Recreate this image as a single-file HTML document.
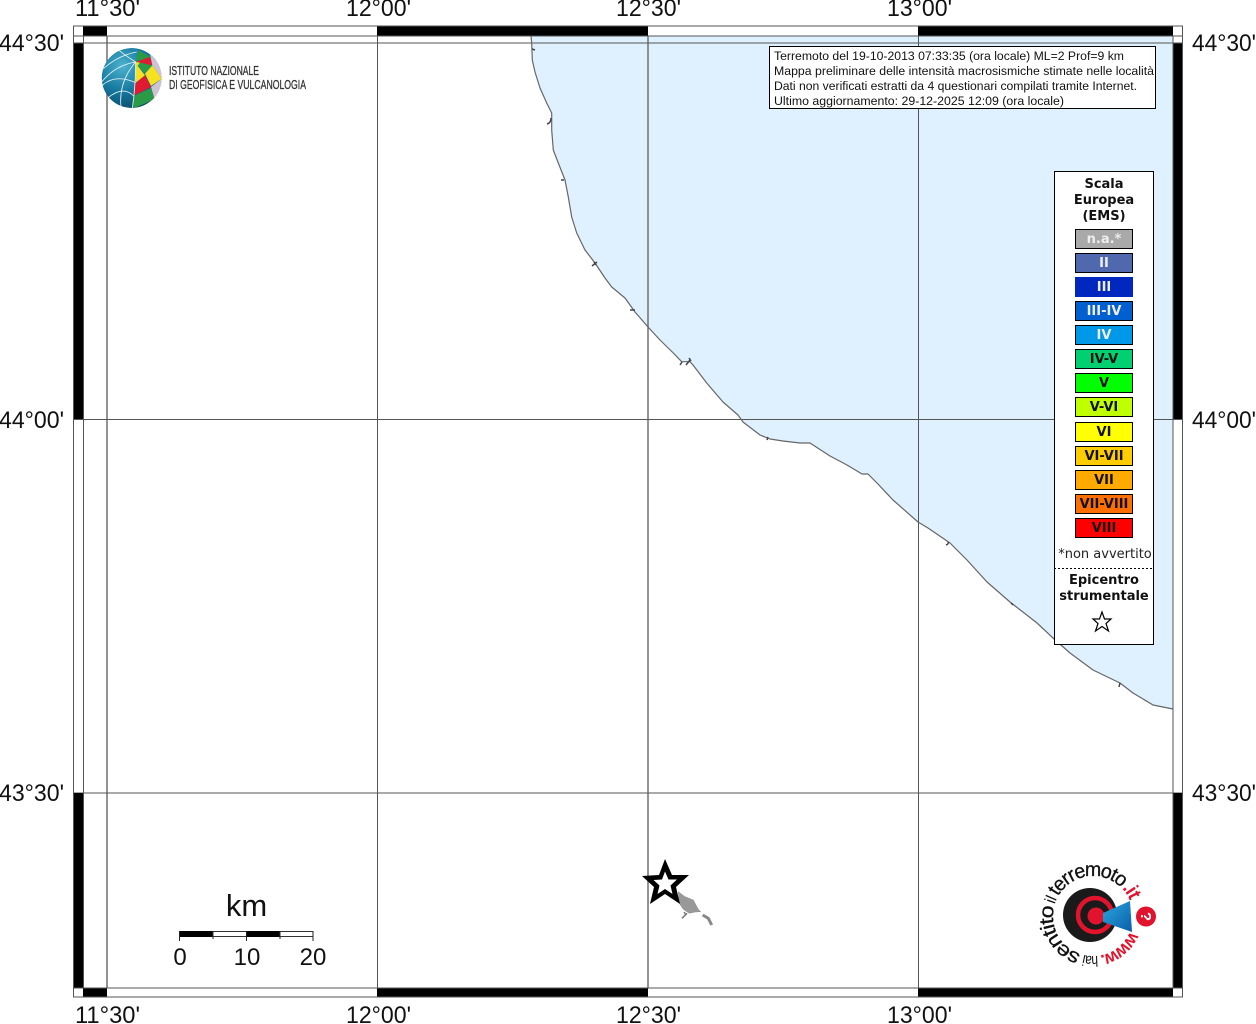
<!DOCTYPE html>
<html>
<head>
<meta charset="utf-8">
<title>Mappa intensità macrosismiche</title>
<style>
html,body{margin:0;padding:0;background:#fff;width:1256px;height:1024px;overflow:hidden}
svg{display:block;position:absolute;left:0;top:0}
.t{font-family:"Liberation Sans",sans-serif;font-size:24px;fill:#111}
.i{font-family:"Liberation Sans",sans-serif;font-size:12.3px;fill:#111}
.d{font-family:"DejaVu Sans",sans-serif;font-weight:bold;font-size:13px;text-anchor:middle;fill:#111}
.s{font-family:"DejaVu Sans",sans-serif;font-weight:bold;font-size:13px;text-anchor:middle;fill:#111}
.w{fill:#eee}
</style>
</head>
<body>
<svg width="1256" height="1024" viewBox="0 0 1256 1024" xmlns="http://www.w3.org/2000/svg">
<rect width="1256" height="1024" fill="#fff"/>

<!-- sea -->
<polygon fill="#dff1ff" points="531,36 1173,36 1173,709 1153,705 1133,693 1120,683 1093,670 1070,653 1053,638 1037,623 1010,602 987,582 967,560 950,543 928,528 918,522 893,500 877,483 868,474 862,474 847,465 830,456 810,443 800,443 783,441 770,439 760,435 743,422 738,415 723,402 706.7,383 693,365 690,361.7 681.7,361.7 673.3,353 660,340 648,327 635,312 625,298 611.7,287 605,278 595,263 585,250 576.7,233 571.7,217 568.3,197 565,180 558.3,163 553.3,150 551.7,130 551.7,113 546.7,103 540,88 535,72 532.3,60"/>

<!-- graticule -->
<g stroke="#555" stroke-width="1" fill="none">
<path d="M107 36V988M648 36V988" stroke-width="1.4" stroke="#666"/>
<path d="M377.500 36V988M918.500 36V988"/>
<path d="M74 419.500H1182M74 793H1182"/>
<path d="M74 43H1182M74 36H1182"/>
</g>

<!-- coast -->
<polyline fill="none" stroke="#666" stroke-width="1.2" stroke-linejoin="round" points="531,36 531.7,43 532.3,60 535,72 540,88 546.7,103 551.7,113 551.7,130 553.3,150 558.3,163 565,180 568.3,197 571.7,217 576.7,233 585,250 595,263 605,278 611.7,287 625,298 635,312 648,327 660,340 673.3,353 681.7,361.7 690,361.7 693,365 706.7,383 723,402 738,415 743,422 760,435 770,439 783,441 800,443 810,443 830,456 847,465 862,474 868,474 877,483 893,500 918,522 928,528 950,543 967,560 987,582 1010,602 1037,623 1053,638 1070,653 1093,670 1120,683 1133,693 1153,705 1173,709"/>
<g fill="none" stroke="#444" stroke-width="1.5">
<path d="M532 49l3 1"/>
<path d="M551 118q0 5-4 6"/>
<path d="M564 180h-3"/>
<path d="M597 262l-5 4M594 262l2 3"/>
<path d="M635 310l-5-0"/>
<path d="M682 362l-2 3M690 360l-4 5M689 358l2 3"/>
<path d="M768 437l-1 3"/>
<path d="M948 542q1 2-2 3"/>
<path d="M1011 603l2 2"/>
<path d="M1120 683l-1 4"/>
</g>

<!-- frame bands -->
<g fill="#000">
<rect x="83" y="26" width="24" height="10"/>
<rect x="377" y="26" width="271" height="10"/>
<rect x="918" y="26" width="255" height="10"/>
<rect x="83" y="988" width="24" height="9"/>
<rect x="377" y="988" width="271" height="9"/>
<rect x="918" y="988" width="255" height="9"/>
<rect x="74" y="43" width="10" height="376"/>
<rect x="74" y="793" width="10" height="195"/>
<rect x="1173" y="43" width="10" height="376"/>
<rect x="1173" y="793" width="10" height="195"/>
</g>
<g stroke="#555" stroke-width="1" fill="none">
<rect x="73.500" y="26" width="1109" height="971"/>
<rect x="83.500" y="36" width="1089.500" height="952"/>
<path d="M74 43H84M1173 43H1183M73.500 988H84M1173 988H1183"/>
</g>

<!-- tick labels -->
<g class="t">
<text x="75" y="16" textLength="65" lengthAdjust="spacingAndGlyphs">11°30'</text><text x="346" y="16" textLength="65" lengthAdjust="spacingAndGlyphs">12°00'</text><text x="616" y="16" textLength="65" lengthAdjust="spacingAndGlyphs">12°30'</text><text x="887" y="16" textLength="65" lengthAdjust="spacingAndGlyphs">13°00'</text>
<text x="75" y="1023" textLength="65" lengthAdjust="spacingAndGlyphs">11°30'</text><text x="346" y="1023" textLength="65" lengthAdjust="spacingAndGlyphs">12°00'</text><text x="616" y="1023" textLength="65" lengthAdjust="spacingAndGlyphs">12°30'</text><text x="887" y="1023" textLength="65" lengthAdjust="spacingAndGlyphs">13°00'</text>
<text x="-1" y="51" textLength="65" lengthAdjust="spacingAndGlyphs">44°30'</text><text x="-1" y="428" textLength="65" lengthAdjust="spacingAndGlyphs">44°00'</text><text x="-1" y="801" textLength="65" lengthAdjust="spacingAndGlyphs">43°30'</text>
<text x="1192" y="51" textLength="64" lengthAdjust="spacingAndGlyphs">44°30'</text><text x="1192" y="428" textLength="64" lengthAdjust="spacingAndGlyphs">44°00'</text><text x="1192" y="801" textLength="64" lengthAdjust="spacingAndGlyphs">43°30'</text>
</g>

<!-- INGV logo -->
<defs>
<radialGradient id="g" cx="35%" cy="30%" r="75%">
<stop offset="0" stop-color="#4db3cf"/><stop offset=".55" stop-color="#16799f"/><stop offset="1" stop-color="#0b4c6c"/>
</radialGradient>
<clipPath id="c"><circle cx="110" cy="108" r="90"/></clipPath>
<path id="ring" d="M1139 916A46 46 0 1 1 1047 916A46 46 0 1 1 1139 916" fill="none"/>
<linearGradient id="b" x1="0" y1="0" x2="1" y2="1"><stop offset="0" stop-color="#2aa8e0"/><stop offset="1" stop-color="#0a5da8"/></linearGradient>
</defs>
<g transform="translate(95 42) scale(.3333)" clip-path="url(#c)">
<circle cx="110" cy="108" r="90" fill="url(#g)"/>
<polygon points="122,60 130,25 168,45" fill="#2a9a46"/>
<polygon points="122,60 165,45 172,70 135,62" fill="#e01a30"/>
<polygon points="165,36 205,80 200,110 172,70" fill="#cdc3d3"/>
<polygon points="122,60 135,62 128,72 150,100 122,122" fill="#f5e11e"/>
<polygon points="135,62 172,70 150,92 128,72" fill="#2a9a46"/>
<polygon points="172,70 200,110 168,132 150,95" fill="#f5e11e"/>
<polygon points="120,125 150,100 168,135 118,160" fill="#e01a30"/>
<polygon points="168,135 200,110 200,160 178,170" fill="#cdc3d3"/>
<polygon points="116,162 168,138 178,172 114,200" fill="#2a9a46"/>
<g fill="none" stroke="#e8f3f6" stroke-width="2.500">
<path d="M122 60Q70 120 78 196"/>
<path d="M122 60Q122 130 112 200"/>
<path d="M122 60Q60 70 20 120"/>
<path d="M122 60Q90 40 72 25"/>
<path d="M25 80Q70 40 125 30"/>
<path d="M22 130Q60 95 122 122"/>
<path d="M38 168Q85 130 116 162"/>
</g>
</g>
<text x="169" y="75" font-family="Liberation Sans,sans-serif" font-size="13" fill="#333" stroke="#333" stroke-width=".3" textLength="90" lengthAdjust="spacingAndGlyphs">ISTITUTO NAZIONALE</text>
<text x="169" y="89" font-family="Liberation Sans,sans-serif" font-size="13" fill="#333" stroke="#333" stroke-width=".3" textLength="137" lengthAdjust="spacingAndGlyphs">DI GEOFISICA E VULCANOLOGIA</text>

<!-- info box -->
<rect x="769.500" y="46.500" width="386" height="62" fill="#fff" stroke="#000"/>
<g class="i">
<text x="774" y="60" textLength="350" lengthAdjust="spacingAndGlyphs">Terremoto del 19-10-2013 07:33:35 (ora locale) ML=2 Prof=9 km</text>
<text x="774" y="75" textLength="380" lengthAdjust="spacingAndGlyphs">Mappa preliminare delle intensità macrosismiche stimate nelle località</text>
<text x="774" y="90" textLength="363" lengthAdjust="spacingAndGlyphs">Dati non verificati estratti da 4 questionari compilati tramite Internet.</text>
<text x="774" y="105" textLength="290" lengthAdjust="spacingAndGlyphs">Ultimo aggiornamento: 29-12-2025 12:09 (ora locale)</text>
</g>

<!-- legend -->
<rect x="1054.500" y="171.500" width="99" height="473" fill="#fff" stroke="#000"/>
<g class="d">
<text x="1104" y="188">Scala</text>
<text x="1104" y="204">Europea</text>
<text x="1104" y="220">(EMS)</text>
</g>
<g stroke="#000" stroke-width="1">
<rect x="1075.500" y="229.500" width="57" height="19" fill="#a9a9a9"/>
<rect x="1075.500" y="253.500" width="57" height="19" fill="#5068ae"/>
<rect x="1075.500" y="277.500" width="57" height="19" fill="#0028bf" stroke="#0028bf"/>
<rect x="1075.500" y="301.500" width="57" height="19" fill="#0060d0"/>
<rect x="1075.500" y="325.500" width="57" height="19" fill="#0098e8"/>
<rect x="1075.500" y="349.500" width="57" height="19" fill="#00d070"/>
<rect x="1075.500" y="373.500" width="57" height="19" fill="#00ff00"/>
<rect x="1075.500" y="397.500" width="57" height="19" fill="#c0ff00"/>
<rect x="1075.500" y="422.500" width="57" height="19" fill="#ffff00"/>
<rect x="1075.500" y="446.500" width="57" height="19" fill="#ffcc00"/>
<rect x="1075.500" y="470.500" width="57" height="19" fill="#ffaa00"/>
<rect x="1075.500" y="494.500" width="57" height="19" fill="#ff6e00"/>
<rect x="1075.500" y="518.500" width="57" height="19" fill="#ff0000"/>
</g>
<g class="s">
<text class="s w" x="1104" y="243">n.a.*</text>
<text class="s w" x="1104" y="267">II</text>
<text class="s w" x="1104" y="291">III</text>
<text class="s w" x="1104" y="315">III-IV</text>
<text class="s w" x="1104" y="339">IV</text>
<text x="1104" y="363">IV-V</text>
<text x="1104" y="387">V</text>
<text x="1104" y="411">V-VI</text>
<text x="1104" y="436">VI</text>
<text x="1104" y="460">VI-VII</text>
<text x="1104" y="484">VII</text>
<text x="1104" y="508">VII-VIII</text>
<text x="1104" y="532">VIII</text>
</g>
<text x="1105" y="558" font-family="DejaVu Sans,sans-serif" font-size="13" text-anchor="middle" fill="#222">*non avvertito</text>
<path d="M1054 568.500H1152" stroke="#000" stroke-dasharray="2 2"/>
<text class="d" x="1104" y="584">Epicentro</text>
<text class="d" x="1104" y="600">strumentale</text>
<polygon points="1102,612 1104.500,619 1111,619 1106,623.500 1108.500,631 1102,626.500 1095.500,631 1098,623.500 1093,619 1099.500,619" fill="#fff" stroke="#000" stroke-width="1.2"/>

<!-- epicentre + island -->
<polygon points="678.300,891.700 685,896.700 693.300,900 698.300,909.300 700.700,911.700 695,912 689.300,913.300 683.300,909.300 679.300,903.300" fill="#999" stroke="#888" stroke-width=".5"/>
<path d="M682 918.300L687 913.300M684 912l2 3" fill="none" stroke="#777" stroke-width="1.500"/>
<path d="M702.700 915L708.300 918.300L711.700 925" fill="none" stroke="#888" stroke-width="3"/>
<polygon points="665,859 672,875 689,875 676,887 680,904 665,894 650,904 654,887 642,876 659,875" fill="#000"/>
<polygon points="665,871.500 668.500,879.500 677,879.500 670.500,885.500 672.500,894 665,889 657.500,894 659.500,885.500 653.500,880 662,879.500" fill="#fff"/>

<!-- scale bar -->
<text x="246.500" y="916" font-family="Liberation Sans,sans-serif" font-size="31" text-anchor="middle" fill="#111">km</text>
<rect x="179.500" y="931" width="33.500" height="6" fill="#000"/>
<rect x="213" y="931.500" width="33.500" height="5" fill="#fff" stroke="#333"/>
<rect x="246.500" y="931" width="33.500" height="6" fill="#000"/>
<rect x="280" y="931.500" width="33" height="5" fill="#fff" stroke="#333"/>
<path d="M179.500 931V941M246.500 937V941M313 931V941M213 937V939M280 937V939" stroke="#222"/>
<g class="t" text-anchor="middle">
<text x="180" y="965">0</text><text x="247" y="965">10</text><text x="313" y="965">20</text>
</g>

<!-- hai sentito logo -->
<circle cx="1090" cy="915" r="27" fill="#1a1a1a"/>
<circle cx="1095" cy="915" r="17" fill="none" stroke="#e2142d" stroke-width="4.500"/>
<circle cx="1096" cy="916" r="8.500" fill="#e2142d"/>
<polygon points="1103,913 1130,901 1132,932 1103,922" fill="url(#b)"/>
<circle cx="1146" cy="916.500" r="10" fill="#e2142d"/>
<text x="1146" y="921.500" font-family="Liberation Sans,sans-serif" font-weight="bold" font-size="15" fill="#fff" text-anchor="middle" transform="rotate(90 1146 916.500)">?</text>
<g font-family="Liberation Sans,sans-serif" fill="#111">
<text dy="6" font-size="18" font-weight="bold" fill="#e2142d"><textPath href="#ring" startOffset="19" textLength="45" lengthAdjust="spacingAndGlyphs">www.</textPath></text>
<text dy="6" font-size="15"><textPath href="#ring" startOffset="67" textLength="16" lengthAdjust="spacingAndGlyphs">hai</textPath></text>
<text dy="6" font-size="20" stroke="#111" stroke-width=".3"><textPath href="#ring" startOffset="87" textLength="68" lengthAdjust="spacingAndGlyphs">sentito</textPath></text>
<text dy="6" font-size="16"><textPath href="#ring" startOffset="158" textLength="7" lengthAdjust="spacingAndGlyphs">il</textPath></text>
<text dy="6" font-size="20" stroke="#111" stroke-width=".3"><textPath href="#ring" startOffset="168" textLength="84" lengthAdjust="spacingAndGlyphs">terremoto</textPath></text>
<text dy="6" font-size="20" font-weight="bold" fill="#e2142d"><textPath href="#ring" startOffset="254" textLength="16" lengthAdjust="spacingAndGlyphs">.it</textPath></text>
</g>
</svg>
</body>
</html>
